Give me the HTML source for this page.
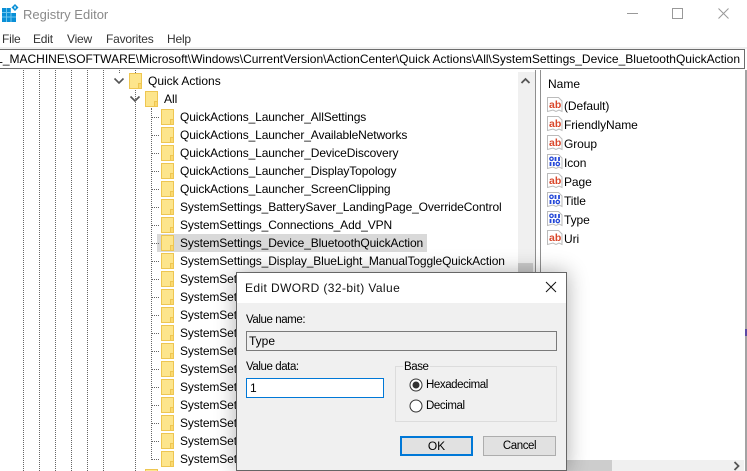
<!DOCTYPE html>
<html><head><meta charset="utf-8"><title>Registry Editor</title>
<style>
html,body{margin:0;padding:0;background:#fff}
#p{position:relative;width:747px;height:471px;overflow:hidden;background:#fff;font:12px "Liberation Sans",sans-serif;color:#000}
#p div,#p span,#p svg{position:absolute}
.t{white-space:nowrap;line-height:16px;height:16px}
.m{top:31px;color:#333;letter-spacing:-.2px}
.d{width:0;border-left:1px dotted #666;top:70px;bottom:0}
.h{height:0;width:7px;left:152px;border-top:1px dotted #666}
.f{left:161px;width:11px;height:14px;border:1px solid #eec651;background:#fde58c}
.f:after{content:"";position:absolute;right:-1px;bottom:-1px;width:2px;height:4px;border:1px solid #eec651;background:#fbd96f}
.r{left:180px;letter-spacing:-.12px}
.n{left:564px;letter-spacing:-.08px}
.i{left:547px;width:16px;height:16px}
.s{font-size:11.5px;letter-spacing:-.42px}
.b{box-sizing:border-box;height:20px;width:73px;top:436px;background:#e1e1e1;text-align:center;line-height:17px}
</style></head><body><div id="p">

<svg style="left:2px;top:4px" width="17" height="18" viewBox="0 0 17 18"><rect x="0" y="4" width="14" height="14" fill="#0a8fd6"/><path d="M0 8.5h14M0 13h14M4.5 4v14M9 4v14" stroke="#6cc6f0" stroke-width="1"/><path d="M9 4h5v5H9z" fill="#fff"/><path d="M13 0l3.5 3.5-3.5 3.5-3.5-3.5z" fill="#0a8fd6"/><rect x="12" y="2.5" width="2" height="2" fill="#bfe8fb"/></svg>
<div class="t" style="left:23px;top:7px;color:#8a8a8a;font-size:13px">Registry Editor</div>
<div style="left:627px;top:13px;width:11px;height:1px;background:#999"></div>
<div style="left:672px;top:8px;width:9px;height:9px;border:1px solid #999"></div>
<svg style="left:717px;top:7px" width="13" height="13" viewBox="0 0 13 13"><path d="M1.5 1.5l10 10M11.5 1.5l-10 10" stroke="#999" stroke-width="1"/></svg>

<div class="t m" style="left:2px">File</div>
<div class="t m" style="left:33px">Edit</div>
<div class="t m" style="left:67px">View</div>
<div class="t m" style="left:106px">Favorites</div>
<div class="t m" style="left:167px">Help</div>

<div style="left:0;top:47px;width:747px;height:2px;background:#f0f0f0"></div>
<div style="left:-2px;top:49px;width:745px;height:18px;border:1px solid #6d6d6d;background:#fff;overflow:hidden">
<div class="t" style="right:4px;top:1px">HKEY_LOCAL_MACHINE\SOFTWARE\Microsoft\Windows\CurrentVersion\ActionCenter\Quick Actions\All\SystemSettings_Device_BluetoothQuickAction</div></div>

<div class="d" style="left:23px"></div><div class="d" style="left:39px"></div><div class="d" style="left:55px"></div><div class="d" style="left:71px"></div><div class="d" style="left:87px"></div><div class="d" style="left:103px"></div>
<div class="d" style="left:119px;height:3px;bottom:auto"></div>
<div class="d" style="left:135px"></div>
<div class="d" style="left:151px;top:108px;bottom:11px"></div>

<svg style="left:113px;top:77px" width="12" height="8"><path d="M1.5 1.5L6 6l4.5-4.5" fill="none" stroke="#555" stroke-width="1.6"/></svg>
<svg style="left:129px;top:95px" width="12" height="8"><path d="M1.5 1.5L6 6l4.5-4.5" fill="none" stroke="#555" stroke-width="1.6"/></svg>

<div class="f" style="left:129px;top:73px"></div><div class="t" style="left:148px;top:73px">Quick Actions</div>
<div class="f" style="left:145px;top:91px"></div><div class="t" style="left:164px;top:91px">All</div>

<div style="left:157px;top:234px;width:270px;height:18px;background:#d9d9d9"></div>

<div class="h" style="top:117px"></div><div class="f" style="top:109px"></div><div class="t r" style="top:109px">QuickActions_Launcher_AllSettings</div>
<div class="h" style="top:135px"></div><div class="f" style="top:127px"></div><div class="t r" style="top:127px">QuickActions_Launcher_AvailableNetworks</div>
<div class="h" style="top:153px"></div><div class="f" style="top:145px"></div><div class="t r" style="top:145px">QuickActions_Launcher_DeviceDiscovery</div>
<div class="h" style="top:171px"></div><div class="f" style="top:163px"></div><div class="t r" style="top:163px">QuickActions_Launcher_DisplayTopology</div>
<div class="h" style="top:189px"></div><div class="f" style="top:181px"></div><div class="t r" style="top:181px">QuickActions_Launcher_ScreenClipping</div>
<div class="h" style="top:207px"></div><div class="f" style="top:199px"></div><div class="t r" style="top:199px">SystemSettings_BatterySaver_LandingPage_OverrideControl</div>
<div class="h" style="top:225px"></div><div class="f" style="top:217px"></div><div class="t r" style="top:217px">SystemSettings_Connections_Add_VPN</div>
<div class="h" style="top:243px"></div><div class="f" style="top:235px"></div><div class="t r" style="top:235px">SystemSettings_Device_BluetoothQuickAction</div>
<div class="h" style="top:261px"></div><div class="f" style="top:253px"></div><div class="t r" style="top:253px">SystemSettings_Display_BlueLight_ManualToggleQuickAction</div>
<div class="h" style="top:279px"></div><div class="f" style="top:271px"></div><div class="t r" style="top:271px">SystemSettings</div>
<div class="h" style="top:297px"></div><div class="f" style="top:289px"></div><div class="t r" style="top:289px">SystemSettings</div>
<div class="h" style="top:315px"></div><div class="f" style="top:307px"></div><div class="t r" style="top:307px">SystemSettings</div>
<div class="h" style="top:333px"></div><div class="f" style="top:325px"></div><div class="t r" style="top:325px">SystemSettings</div>
<div class="h" style="top:351px"></div><div class="f" style="top:343px"></div><div class="t r" style="top:343px">SystemSettings</div>
<div class="h" style="top:369px"></div><div class="f" style="top:361px"></div><div class="t r" style="top:361px">SystemSettings</div>
<div class="h" style="top:387px"></div><div class="f" style="top:379px"></div><div class="t r" style="top:379px">SystemSettings</div>
<div class="h" style="top:405px"></div><div class="f" style="top:397px"></div><div class="t r" style="top:397px">SystemSettings</div>
<div class="h" style="top:423px"></div><div class="f" style="top:415px"></div><div class="t r" style="top:415px">SystemSettings</div>
<div class="h" style="top:441px"></div><div class="f" style="top:433px"></div><div class="t r" style="top:433px">SystemSettings</div>
<div class="h" style="top:459px"></div><div class="f" style="top:451px"></div><div class="t r" style="top:451px">SystemSettings</div>
<div class="f" style="left:145px;top:469px"></div>

<div style="left:518px;top:72px;width:17px;height:399px;background:#f0f0f0"></div>
<svg style="left:520px;top:77px" width="11" height="8"><path d="M1.5 6L5.5 2l4 4" fill="none" stroke="#555" stroke-width="1.8"/></svg>
<div style="left:518px;top:263px;width:15px;height:10px;background:#cdcdcd"></div>
<div style="left:535px;top:70px;width:1px;height:401px;background:#8f8f8f"></div>
<div style="left:540px;top:70px;width:1px;height:401px;background:#8f8f8f"></div>
<div style="left:745px;top:70px;width:2px;height:401px;background:#a3a3a3"></div>
<div style="left:745px;top:329px;width:2px;height:7px;background:#5b4aa5"></div>

<div class="t" style="left:548px;top:76px">Name</div>

<svg class="i" style="top:97px" viewBox="0 0 16 16"><path d="M.5 .5h11l3.5 3.5v10.5l-3-1.5-3 1.5-3-1.5-5.5 1.5z" fill="#fff" stroke="#bbb"/><text x="2" y="11" font-family="Liberation Sans" font-weight="bold" font-size="10.5" fill="#d9472b">ab</text></svg>
<div class="t n" style="top:98px">(Default)</div>
<svg class="i" style="top:116px" viewBox="0 0 16 16"><path d="M.5 .5h11l3.5 3.5v10.5l-3-1.5-3 1.5-3-1.5-5.5 1.5z" fill="#fff" stroke="#bbb"/><text x="2" y="11" font-family="Liberation Sans" font-weight="bold" font-size="10.5" fill="#d9472b">ab</text></svg>
<div class="t n" style="top:117px">FriendlyName</div>
<svg class="i" style="top:135px" viewBox="0 0 16 16"><path d="M.5 .5h11l3.5 3.5v10.5l-3-1.5-3 1.5-3-1.5-5.5 1.5z" fill="#fff" stroke="#bbb"/><text x="2" y="11" font-family="Liberation Sans" font-weight="bold" font-size="10.5" fill="#d9472b">ab</text></svg>
<div class="t n" style="top:136px">Group</div>
<svg class="i" style="top:154px" viewBox="0 0 16 16"><path d="M.5 .5h11l3.5 3.5v10.5l-3-1.5-3 1.5-3-1.5-5.5 1.5z" fill="#fff" stroke="#bbb"/><circle cx="4.5" cy="4.8" r="1.7" fill="none" stroke="#2548d8" stroke-width="1.3"/><circle cx="10.8" cy="10" r="1.7" fill="none" stroke="#2548d8" stroke-width="1.3"/><path d="M8.5 3v4M12 3v4M3.5 8v4M6.8 8v4" stroke="#2548d8" stroke-width="1.8"/></svg>
<div class="t n" style="top:155px">Icon</div>
<svg class="i" style="top:173px" viewBox="0 0 16 16"><path d="M.5 .5h11l3.5 3.5v10.5l-3-1.5-3 1.5-3-1.5-5.5 1.5z" fill="#fff" stroke="#bbb"/><text x="2" y="11" font-family="Liberation Sans" font-weight="bold" font-size="10.5" fill="#d9472b">ab</text></svg>
<div class="t n" style="top:174px">Page</div>
<svg class="i" style="top:192px" viewBox="0 0 16 16"><path d="M.5 .5h11l3.5 3.5v10.5l-3-1.5-3 1.5-3-1.5-5.5 1.5z" fill="#fff" stroke="#bbb"/><circle cx="4.5" cy="4.8" r="1.7" fill="none" stroke="#2548d8" stroke-width="1.3"/><circle cx="10.8" cy="10" r="1.7" fill="none" stroke="#2548d8" stroke-width="1.3"/><path d="M8.5 3v4M12 3v4M3.5 8v4M6.8 8v4" stroke="#2548d8" stroke-width="1.8"/></svg>
<div class="t n" style="top:193px">Title</div>
<svg class="i" style="top:211px" viewBox="0 0 16 16"><path d="M.5 .5h11l3.5 3.5v10.5l-3-1.5-3 1.5-3-1.5-5.5 1.5z" fill="#fff" stroke="#bbb"/><circle cx="4.5" cy="4.8" r="1.7" fill="none" stroke="#2548d8" stroke-width="1.3"/><circle cx="10.8" cy="10" r="1.7" fill="none" stroke="#2548d8" stroke-width="1.3"/><path d="M8.5 3v4M12 3v4M3.5 8v4M6.8 8v4" stroke="#2548d8" stroke-width="1.8"/></svg>
<div class="t n" style="top:212px">Type</div>
<svg class="i" style="top:230px" viewBox="0 0 16 16"><path d="M.5 .5h11l3.5 3.5v10.5l-3-1.5-3 1.5-3-1.5-5.5 1.5z" fill="#fff" stroke="#bbb"/><text x="2" y="11" font-family="Liberation Sans" font-weight="bold" font-size="10.5" fill="#d9472b">ab</text></svg>
<div class="t n" style="top:231px">Uri</div>

<div style="left:566px;top:460px;width:178px;height:11px;background:#f0f0f0"></div>
<div style="left:566px;top:460px;width:46px;height:11px;background:#cdcdcd"></div>
<svg style="left:732px;top:461px" width="10" height="10"><path d="M2.5 1l4 4-4 4" fill="none" stroke="#555" stroke-width="1.8"/></svg>

<div style="left:236px;top:272px;width:329px;height:197px;border:1px solid #666;background:#f0f0f0;box-shadow:0 0 20px rgba(0,0,0,.32)"></div>
<div style="left:237px;top:273px;width:329px;height:30px;background:#fff"></div>
<div class="t" style="left:245px;top:280px;color:#111;letter-spacing:.4px">Edit DWORD (32-bit) Value</div>
<svg style="left:545px;top:281px" width="12" height="12"><path d="M1 1l10 10M11 1L1 11" stroke="#111" stroke-width="1"/></svg>

<div class="t s" style="left:246px;top:312px">Value name:</div>
<div style="left:246px;top:331px;width:309px;height:18px;border:1px solid #7a7a7a;background:#efefef"></div>
<div class="t" style="left:249px;top:333px">Type</div>
<div class="t s" style="left:246px;top:359px">Value data:</div>
<div style="left:246px;top:378px;width:136px;height:18px;border:1px solid #0078d7;background:#fff"></div>
<div class="t" style="left:250px;top:380px">1</div>

<div style="left:395px;top:366px;width:160px;height:54px;border:1px solid #dcdcdc"></div>
<div class="t s" style="left:403px;top:359px;background:#f0f0f0;padding:0 1px">Base</div>
<svg style="left:409px;top:378px" width="14" height="14"><circle cx="7" cy="7" r="6" fill="#fff" stroke="#333"/><circle cx="7" cy="7" r="3.5" fill="#333"/></svg>
<div class="t s" style="left:426px;top:377px">Hexadecimal</div>
<svg style="left:409px;top:399px" width="14" height="14"><circle cx="7" cy="7" r="6" fill="#fff" stroke="#333"/></svg>
<div class="t s" style="left:426px;top:398px">Decimal</div>

<div class="b" style="left:400px;border:2px solid #0078d7">OK</div>
<div class="b s" style="left:483px;border:1px solid #adadad;line-height:18px;height:20px">Cancel</div>

</div></body></html>
